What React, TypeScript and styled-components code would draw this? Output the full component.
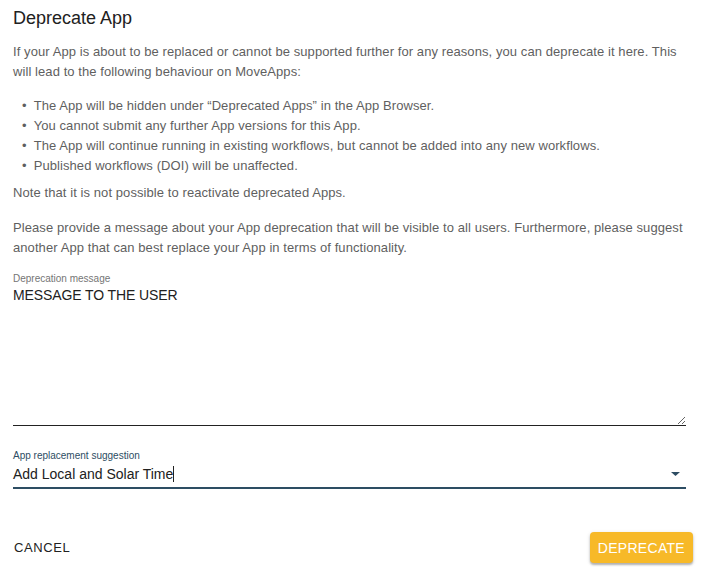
import styled, { createGlobalStyle } from 'styled-components';

const GlobalStyle = createGlobalStyle`
  body {
    margin: 0;
    background: #fff;
    font-family: 'Liberation Sans', Arial, sans-serif;
  }
`;

const Dialog = styled.div`
  width: 702px;
  height: 567px;
  box-sizing: border-box;
  display: flex;
  flex-direction: column;
  background: #fff;
`;

const Title = styled.h2`
  margin: 0;
  padding: 6px 13px 0;
  font-size: 18px;
  line-height: 24px;
  font-weight: 400;
  color: #212121;
`;

const Content = styled.div`
  padding: 0 16px 0 13px;
  display: flex;
  flex-direction: column;
`;

const Text = styled.p<{ $top?: number }>`
  margin: ${(p) => p.$top ?? 0}px 0 0;
  font-size: 13px;
  line-height: 20px;
  letter-spacing: 0.08px;
  color: #5f5f5f;
`;

const BulletList = styled.ul`
  margin: 14px 0 0;
  padding: 0 0 0 9px;
  list-style: none;
  font-size: 13px;
  line-height: 20px;
  letter-spacing: 0.08px;
  color: #5f5f5f;
`;

const Bullet = styled.li`
  display: flex;
  gap: 7px;
  &::before {
    content: '•';
    color: #5f5f5f;
  }
`;

const Field = styled.div<{ $top: number }>`
  margin-top: ${(p) => p.$top}px;
  display: flex;
  flex-direction: column;
  position: relative;
`;

const Label = styled.label<{ $focused?: boolean }>`
  font-size: 10px;
  line-height: 12px;
  color: ${(p) => (p.$focused ? '#2d4d63' : '#757575')};
`;

const TextArea = styled.textarea`
  margin-top: 0;
  height: 140px;
  padding: 0;
  border: none;
  border-bottom: 1px solid #222;
  resize: vertical;
  font-family: inherit;
  font-size: 14px;
  line-height: 20px;
  letter-spacing: -0.1px;
  color: #212121;
  outline: none;
  background: transparent;
`;

const SelectBox = styled.div`
  margin-top: 1px;
  height: 26px;
  display: flex;
  align-items: center;
  justify-content: space-between;
  border-bottom: 2px solid #2d4d63;
  font-size: 14px;
  color: #212121;
  box-sizing: border-box;
  padding-bottom: 2px;
`;

const Caret = styled.span`
  display: inline-block;
  width: 1px;
  height: 16px;
  background: #212121;
  vertical-align: -3px;
`;

const Arrow = styled.svg`
  width: 9px;
  height: 4px;
  margin-right: 6px;
  fill: #2d4d63;
`;

const Actions = styled.div`
  margin-top: auto;
  padding: 0 9px 4px 6px;
  display: flex;
  justify-content: space-between;
  align-items: center;
`;

const TextButton = styled.button`
  border: none;
  background: none;
  padding: 8px 8px;
  font-family: inherit;
  font-size: 13px;
  letter-spacing: 0.6px;
  color: #222;
  text-transform: uppercase;
  cursor: pointer;
`;

const PrimaryButton = styled.button`
  border: none;
  border-radius: 4px;
  background: #f7b928;
  color: #fff;
  height: 31px;
  padding: 0 8px;
  font-family: inherit;
  font-size: 14px;
  letter-spacing: 0.3px;
  text-transform: uppercase;
  box-shadow: 0 2px 2px rgba(0, 0, 0, 0.25), 0 1px 4px rgba(0, 0, 0, 0.12);
  cursor: pointer;
`;

const bullets = [
  'The App will be hidden under “Deprecated Apps” in the App Browser.',
  'You cannot submit any further App versions for this App.',
  'The App will continue running in existing workflows, but cannot be added into any new workflows.',
  'Published workflows (DOI) will be unaffected.',
];

const App = () => {
  return (
    <>
      <GlobalStyle />
      <Dialog>
        <Title>Deprecate App</Title>
        <Content>
          <Text $top={12}>
            If your App is about to be replaced or cannot be supported further for any reasons, you can deprecate it here. This
            will lead to the following behaviour on MoveApps:
          </Text>
          <BulletList>
            {bullets.map((b) => (
              <Bullet key={b}>{b}</Bullet>
            ))}
          </BulletList>
          <Text $top={7}>Note that it is not possible to reactivate deprecated Apps.</Text>
          <Text $top={15}>
            Please provide a message about your App deprecation that will be visible to all users. Furthermore, please suggest
            another App that can best replace your App in terms of functionality.
          </Text>
          <Field $top={15}>
            <Label>Deprecation message</Label>
            <TextArea defaultValue="MESSAGE TO THE USER" />
          </Field>
          <Field $top={24}>
            <Label $focused>App replacement suggestion</Label>
            <SelectBox>
              <span>
                Add Local and Solar Time
                <Caret />
              </span>
              <Arrow viewBox="0 0 9 4">
                <path d="M0 0 L9 0 L4.5 4 Z" />
              </Arrow>
            </SelectBox>
          </Field>
        </Content>
        <Actions>
          <TextButton>Cancel</TextButton>
          <PrimaryButton>Deprecate</PrimaryButton>
        </Actions>
      </Dialog>
    </>
  );
};

export default App;
